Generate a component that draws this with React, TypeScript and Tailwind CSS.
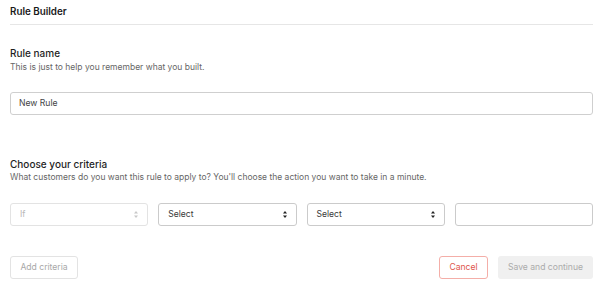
function SelectBox({ label, muted }: { label: string; muted?: boolean }) {
  return (
    <div
      className={`h-[23px] flex items-center justify-between pl-[9px] pr-[9px] rounded-[3px] border ${
        muted ? 'border-[#e3e3e3] text-[#b8b8b8]' : 'border-[#cbcbcb] text-[#3a3a3a]'
      } text-[8.6px]`}
    >
      <span>{label}</span>
      <svg width="4" height="7" viewBox="0 0 4 7" className={muted ? 'text-[#c8c8c8]' : 'text-[#222]'}>
        <path d="M2 0 L4 2.6 L0 2.6 Z" fill="currentColor" />
        <path d="M2 7 L4 4.4 L0 4.4 Z" fill="currentColor" />
      </svg>
    </div>
  );
}

export default function App() {
  return (
    <div className="w-[600px] h-[285px] bg-white pl-[10px] pr-[7px] font-['Inter',sans-serif] text-[#222] overflow-hidden">
      {/* Header */}
      <div className="h-[25px] flex items-center border-b border-[#e6e6e6]">
        <h1 className="text-[9.8px] font-semibold text-[#1a1a1a]">Rule Builder</h1>
      </div>

      {/* Rule name */}
      <div className="pt-[22px]">
        <h2 className="text-[10px] font-medium leading-[12px] text-[#1f1f1f]">Rule name</h2>
        <p className="mt-[3px] text-[8.5px] leading-[11px] text-[#666]">
          This is just to help you remember what you built.
        </p>
      </div>
      <div className="mt-[19px] h-[23px] border border-[#cfcfcf] rounded-[3px] flex items-center pl-[8px] text-[8.6px] text-[#444]">
        New Rule
      </div>

      {/* Criteria */}
      <div className="pt-[43px]">
        <h2 className="text-[10px] font-medium leading-[12px] text-[#1f1f1f]">Choose your criteria</h2>
        <p className="mt-[2px] text-[8.5px] leading-[11px] text-[#666]">
          What customers do you want this rule to apply to? You'll choose the action you want to take in a minute.
        </p>
      </div>
      <div className="mt-[20px] grid grid-cols-4 gap-[10px]">
        <SelectBox label="If" muted />
        <SelectBox label="Select" />
        <SelectBox label="Select" />
        <div className="h-[23px] rounded-[3px] border border-[#cbcbcb]" />
      </div>

      {/* Actions */}
      <div className="mt-[30px] flex items-center">
        <button className="h-[23px] w-[68px] rounded-[3px] border border-[#e3e3e3] text-[8.6px] text-[#a8a8a8]">
          Add criteria
        </button>
        <div className="ml-auto flex gap-[10px]">
          <button className="h-[23px] w-[49px] rounded-[3px] border border-[#f4aea8] text-[8.6px] text-[#e0554c]">
            Cancel
          </button>
          <button className="h-[23px] w-[95px] rounded-[3px] bg-[#f0f0f0] text-[8.6px] text-[#ababab]">
            Save and continue
          </button>
        </div>
      </div>
    </div>
  );
}
